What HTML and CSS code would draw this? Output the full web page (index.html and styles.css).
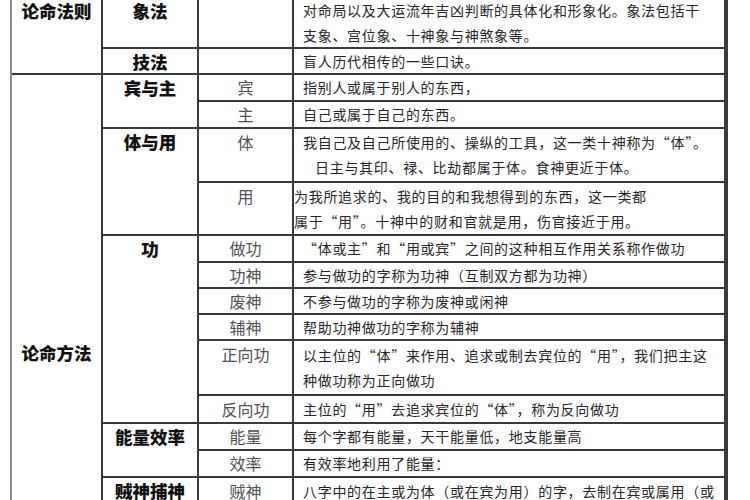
FILE: index.html
```html
<!DOCTYPE html>
<html lang="zh-CN">
<head>
<meta charset="utf-8">
<title>论命法则与方法</title>
<link rel="stylesheet" href="styles.css">
</head>
<body>
<div class="sheet">
  <div class="cat r1-2">论命法则</div>
  <div class="head">象法</div>
  <div class="sub"></div>
  <div class="desc"><span>对命局以及大运流年吉凶判断的具体化和形象化。象法包括干</span><span>支象、宫位象、十神象与神煞象等。</span></div>

  <div class="head">技法</div>
  <div class="sub"></div>
  <div class="desc"><span>盲人历代相传的一些口诀。</span></div>

  <div class="cat r3-16 low">论命方法</div>
  <div class="head span2">宾与主</div>
  <div class="sub">宾</div>
  <div class="desc"><span>指别人或属于别人的东西，</span></div>

  <div class="sub">主</div>
  <div class="desc"><span>自己或属于自己的东西。</span></div>

  <div class="head span2">体与用</div>
  <div class="sub top">体</div>
  <div class="desc"><span>我自己及自己所使用的、操纵的工具，这一类十神称为“体”。</span><span class="indent">日主与其印、禄、比劫都属于体。食神更近于体。</span></div>

  <div class="sub top">用</div>
  <div class="desc flush"><span>为我所追求的、我的目的和我想得到的东西，这一类都</span><span>属于“用”。十神中的财和官就是用，伤官接近于用。</span></div>

  <div class="head span6">功</div>
  <div class="sub">做功</div>
  <div class="desc"><span>“体或主”和“用或宾”之间的这种相互作用关系称作做功</span></div>

  <div class="sub">功神</div>
  <div class="desc"><span>参与做功的字称为功神（互制双方都为功神）</span></div>

  <div class="sub">废神</div>
  <div class="desc"><span>不参与做功的字称为废神或闲神</span></div>

  <div class="sub">辅神</div>
  <div class="desc"><span>帮助功神做功的字称为辅神</span></div>

  <div class="sub top">正向功</div>
  <div class="desc"><span>以主位的“体”来作用、追求或制去宾位的“用”，我们把主这</span><span>种做功称为正向做功</span></div>

  <div class="sub">反向功</div>
  <div class="desc"><span>主位的“用”去追求宾位的“体”，称为反向做功</span></div>

  <div class="head span2">能量效率</div>
  <div class="sub">能量</div>
  <div class="desc"><span>每个字都有能量，天干能量低，地支能量高</span></div>

  <div class="sub">效率</div>
  <div class="desc"><span>有效率地利用了能量：</span></div>

  <div class="head span2">贼神捕神</div>
  <div class="sub top">贼神</div>
  <div class="desc"><span>八字中的在主或为体（或在宾为用）的字，去制在宾或属用（或</span><span>在主为体）的字，称为贼神</span></div>

  <div class="sub top">捕神</div>
  <div class="desc"><span>制住贼神的字称为捕神</span></div>
</div>
</body>
</html>
```
FILE: styles.css
```css
html, body {
  margin: 0;
  padding: 0;
  background: #ffffff;
}

body {
  width: 750px;
  height: 500px;
  overflow: hidden;
  font-family: "Noto Sans CJK SC", "Noto Sans", sans-serif;
}

.sheet {
  margin: -2px 0 0 10px;
  width: 714px;
  display: grid;
  grid-template-columns: 89px 94px 93px 430px;
  grid-template-rows: 49px 24px 25px 25px 52px 51px 25px 24px 24px 24px 53px 26px 25px 25px 52px 52px;
  gap: 2px;
  background: #3a3a3a;
  border-left: 2px solid #8c8c8c;
  padding-right: 2px;
}

.sheet > div {
  background: #ffffff;
}

.cat {
  font-weight: 900;
  font-size: 17.5px;
  line-height: 25px;
  color: #111111;
  text-align: center;
}

.r1-2 {
  grid-row: span 2;
}

.r3-16 {
  grid-row: span 14;
}

.low {
  padding-top: 265px;
}

.head {
  font-weight: 900;
  font-size: 17.5px;
  line-height: 25px;
  color: #111111;
  text-align: center;
}

.span2 {
  grid-row: span 2;
}

.span6 {
  grid-row: span 6;
}

.sub {
  display: flex;
  justify-content: center;
  align-items: center;
  font-size: 16px;
  line-height: 25px;
  color: #505050;
}

.sub.top {
  align-items: flex-start;
  padding-top: 1px;
}

.desc {
  display: flex;
  flex-direction: column;
  justify-content: center;
  padding-left: 9px;
  font-size: 14px;
  letter-spacing: 0.7px;
  line-height: 25px;
  color: #262626;
  white-space: nowrap;
  overflow: hidden;
}

.desc.flush {
  padding-left: 0;
}

.indent {
  padding-left: 12px;
}
```
